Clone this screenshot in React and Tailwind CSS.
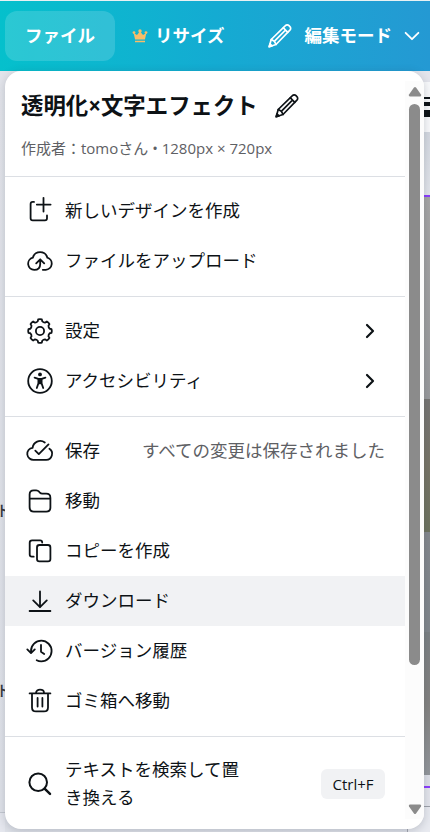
import React from "react";

const Icon = ({ children, className = "w-[30px] h-[30px]", width = 1.8 }) => (
  <svg
    viewBox="0 0 30 30"
    fill="none"
    stroke="currentColor"
    strokeWidth={width}
    strokeLinecap="round"
    strokeLinejoin="round"
    className={`shrink-0 ${className}`}
  >
    {children}
  </svg>
);

const Pencil = ({ className }) => (
  <Icon className={className} width={1.7}>
    <path d="M4.2 25.7l2-7.2L20.4 4.7a2.5 2.5 0 0 1 3.6 0l.9.9a2.5 2.5 0 0 1 0 3.6L11 23.5z" />
    <path d="M18.4 6.9l4.4 4.4M9.3 20.3L20.2 9.3M6.3 18.5l3 1.8 1.8 3.1" />
    <path d="M4.2 25.7l.8-2.8 2 2z" fill="currentColor" />
  </Icon>
);

// eight rounded teeth around the centre
const gearPath = () => {
  const at = (deg, r) => {
    const a = (deg * Math.PI) / 180;
    return `${(15 + r * Math.sin(a)).toFixed(2)} ${(15 - r * Math.cos(a)).toFixed(2)}`;
  };
  let d = `M${at(-9, 11.7)}`;
  for (let i = 0; i < 8; i++) {
    const a = i * 45;
    d += `Q${at(a, 12.1)} ${at(a + 9, 11.7)}L${at(a + 13, 10)}Q${at(a + 22.5, 9)} ${at(a + 32, 10)}L${at(a + 36, 11.7)}`;
  }
  return d + "Z";
};

const icons = {
  create: (
    <Icon>
      <path d="M9 5.9H7.7q-2.1 0-2.1 2.1v14.3q0 2.1 2.1 2.1h12.2q2.1 0 2.1-2.1v-2.8M11.8 8.6h13.8M18.5 1.8v13.8" />
    </Icon>
  ),
  upload: (
    <Icon>
      <path d="M17.8 23.8h3a6.2 6.2 0 0 0 1.6-12.1 7.6 7.6 0 0 0-14.6 0A6.2 6.2 0 0 0 9.2 23.9c3.6 0 6-2.3 6-6v-4.5M11.2 17.3l4-4 4 4" />
    </Icon>
  ),
  settings: (
    <Icon>
      <path d={gearPath()} />
      <circle cx="15" cy="15" r="4.1" />
    </Icon>
  ),
  accessibility: (
    <Icon>
      <circle cx="15" cy="15" r="11.8" />
      <circle cx="15" cy="8.4" r="1.9" fill="currentColor" stroke="none" />
      <path d="M9.6 11.6l3.7 1.2h3.4l3.7-1.2" width="1.6" />
      <path d="M16.6 12.8v4.6l1.6 4.6M13.4 12.8v4.6l-1.6 4.6M13.4 17.3h3.2" />
      <path d="M13.4 12.6h3.2v5h-3.2z" fill="currentColor" stroke="none" />
    </Icon>
  ),
  saved: (
    <Icon>
      <path d="M19.8 6.5A7.6 7.6 0 0 0 7.6 11.8 6 6 0 0 0 9 23.8h12.2a6 6 0 0 0 3.2-11M10.3 14.6l3.5 3.5 9.7-9.7" />
    </Icon>
  ),
  move: (
    <Icon>
      <path d="M4.6 12.7h20.8M4.6 21V8.6q0-4.2 4.2-4.2h2.4q1.7 0 2.9 1.3l.8 1q.9 1 2.3 1h4q4.2 0 4.2 4.2v9.6q0 4.1-4.2 4.1H8.8q-4.2 0-4.2-4.6z" />
    </Icon>
  ),
  copy: (
    <Icon>
      <path d="M8.7 20.7H6.8q-2.1 0-2.1-2.1V6.8q0-2.4 2.4-2.4h8q2.1 0 2.1 2.2" />
      <rect x="12" y="9" width="13.4" height="16.4" rx="2.4" />
    </Icon>
  ),
  download: (
    <Icon>
      <path d="M15 5.4v15.8M8.2 14.4l6.8 6.8 6.8-6.8M4.6 25h20.8" />
    </Icon>
  ),
  history: (
    <Icon>
      <path d="M6 16.4v-1.5a10.3 10.3 0 1 1 10.3 10.4c-2 0-3.5-.5-4.6-1.1M2.3 13.4L6 17.1l3.8-3.7M16 9v6.8l3.2 2.2" />
    </Icon>
  ),
  trash: (
    <Icon>
      <path d="M4.6 7.4h20.8M7 7.4v14q0 4 4 4h8q4 0 4-4v-14M11 7c0-4.4 8-4.4 8 0M12.6 12v8.6M17.4 12v8.6" />
    </Icon>
  ),
  search: (
    <Icon width={2}>
      <circle cx="13.2" cy="13.2" r="8.8" />
      <path d="M19.6 19.6l5.4 5.2" strokeWidth="2.5" />
    </Icon>
  ),
};

const Item = ({ icon, label, note, arrow, active }) => (
  <div
    className={`flex h-[50px] items-center pl-5 pr-5 ${active ? "bg-[#f1f2f4]" : ""}`}
  >
    {icons[icon]}
    <span className="ml-[10px] pb-[2px] whitespace-nowrap">{label}</span>
    {note && (
      <span className="ml-auto pb-[2px] whitespace-nowrap text-[#5e6064]">
        {note}
      </span>
    )}
    {arrow && (
      <Icon className="ml-auto h-[30px] w-[30px]" width={2.2}>
        <path d="M12 9l6 6-6 6" />
      </Icon>
    )}
  </div>
);

const Group = ({ children }) => (
  <div className="border-t border-[#dcdfe4] pt-[9px] pb-[10px]">{children}</div>
);

const TopBar = () => (
  <header className="mt-px flex h-[70px] items-center bg-gradient-to-r from-[#05c0cc] via-[#14abd2] to-[#2499d3] pl-[5px] text-[17.5px] font-bold text-white">
    <div className="flex h-[50px] w-[110px] items-center justify-center rounded-xl bg-white/15 pb-[2px]">
      ファイル
    </div>
    <svg viewBox="0 0 16 14" className="ml-[17px] h-[14px] w-4" fill="#f9bd68">
      <circle cx="8" cy="2" r="1.7" />
      <circle cx="2" cy="3.6" r="1.4" />
      <circle cx="14" cy="3.6" r="1.4" />
      <path d="M1.6 4l3.4 2L8 2.2 11 6l3.4-2-1.5 6.6H3.1zM3 11.8h10v1.4H3z" />
    </svg>
    <span className="ml-[7px] pb-[2px]">リサイズ</span>
    <Pencil className="ml-[41px] h-[30px] w-[30px]" />
    <span className="ml-[9px] pb-[2px] whitespace-nowrap">編集モード</span>
    <Icon className="ml-[5px] h-[30px] w-[30px]" width={1.8}>
      <path d="M8.6 11.8L15 18.2l6.4-6.4" />
    </Icon>
  </header>
);

// sliver of the editor that shows on both sides of the menu
const Editor = () => (
  <div className="flex h-[761px] justify-between bg-gradient-to-b from-[#e3e5eb] to-[#dfe2e9]">
    <div className="flex w-[5px] flex-col text-[15px] leading-5 font-medium text-[#33373d]">
      <div className="mt-[429px] -ml-[4px] w-5">ト</div>
      <div className="mt-[160px] -ml-[4px] w-5">ト</div>
      <div className="mt-[112px] h-px bg-[#c4c8d0]" />
      <div className="flex-1 bg-[#e5e7ee]" />
    </div>
    <div className="flex w-[23px] flex-col">
      <div className="h-[11px] bg-[#e4e5ec]" />
      <div className="flex h-[50px] flex-col items-end bg-[#f8f9fb] pt-[15px]">
        <div className="h-[2px] w-[6px] bg-[#0d1216]" />
        <div className="mt-[3px] h-[4px] w-[6px] bg-[#0d1216]" />
        <div className="mt-[4px] h-[7px] w-[6px] bg-[#0d1216]" />
      </div>
      <div className="h-[63px] bg-gradient-to-b from-[#d3d8e0] to-[#e2e5eb]" />
      <div className="h-[2px] bg-[#8b3dff]" />
      <div className="h-[202px] bg-gradient-to-b from-[#a5a5a5] to-[#999a9c]" />
      <div className="h-[133px] bg-gradient-to-b from-[#767573] via-[#777466] to-[#6d735f]" />
      <div className="h-[100px] bg-gradient-to-b from-[#84888d] to-[#80868b]" />
      <div className="h-[143px] bg-gradient-to-b from-[#7b8083] via-[#838280] to-[#92969b]" />
      <div className="h-[11px] bg-[#dddfe7]" />
      <div className="h-[2px] bg-[#8b3dff]" />
      <div className="h-[18px] bg-[#e3e5ec]" />
      <div className="h-px bg-[#9da1a9]" />
      <div className="flex-1 border-l border-[#a4a8b0] bg-[#e8eaf0]" />
    </div>
  </div>
);

const Scrollbar = () => (
  <div className="my-[10px] flex w-[19px] shrink-0 flex-col items-center bg-[#fcfcfc] pt-[5px] pb-[4px] text-[#8b8b8b]">
    <svg viewBox="0 0 14 11" className="h-[11px] w-[14px]" fill="currentColor">
      <path d="M6 1.6q1-1.2 2 0l5 7q.8 1.9-1 1.9H2q-1.8 0-1-1.9z" />
    </svg>
    <div className="mt-[7px] h-[561px] w-[11px] rounded-full bg-[#8b8b8b]" />
    <svg
      viewBox="0 0 14 11"
      className="mt-auto h-[11px] w-[14px] rotate-180"
      fill="currentColor"
    >
      <path d="M6 1.6q1-1.2 2 0l5 7q.8 1.9-1 1.9H2q-1.8 0-1-1.9z" />
    </svg>
  </div>
);

const FileMenu = () => (
  <div className="absolute top-[71px] left-[5px] flex h-[758px] w-[419px] overflow-hidden rounded-2xl bg-white text-[17.5px] text-[#0d1216] shadow-[0_2px_10px_rgba(40,50,70,0.22)]">
    <div className="w-[400px] shrink-0">
      <div className="h-[105px] pt-5 pl-4">
        <div className="flex h-[30px] items-center">
          <h1 className="text-[22.4px] font-bold whitespace-nowrap">
            透明化×文字エフェクト
          </h1>
          <Pencil className="ml-[14px] h-[30px] w-[30px]" />
        </div>
        <p className="mt-[17px] text-[15px] leading-5 whitespace-nowrap text-[#5e6064]">
          作成者：tomoさん • 1280px × 720px
        </p>
      </div>
      <Group>
        <Item icon="create" label="新しいデザインを作成" />
        <Item icon="upload" label="ファイルをアップロード" />
      </Group>
      <Group>
        <Item icon="settings" label="設定" arrow />
        <Item icon="accessibility" label="アクセシビリティ" arrow />
      </Group>
      <Group>
        <Item icon="saved" label="保存" note="すべての変更は保存されました" />
        <Item icon="move" label="移動" />
        <Item icon="copy" label="コピーを作成" />
        <Item icon="download" label="ダウンロード" active />
        <Item icon="history" label="バージョン履歴" />
        <Item icon="trash" label="ゴミ箱へ移動" />
      </Group>
      <Group>
        <div className="flex h-[76px] items-center px-5">
          {icons.search}
          <span className="ml-[10px] w-[180px] pb-[2px] leading-7">
            テキストを検索して置き換える
          </span>
          <kbd className="ml-auto flex h-[30px] w-16 items-center justify-center rounded-md bg-[#f1f2f4] font-['Open_Sans',sans-serif] text-[15px]">
            Ctrl+F
          </kbd>
        </div>
      </Group>
    </div>
    <Scrollbar />
  </div>
);

const App = () => {
  return (
    <div
      lang="ja"
      className="relative flex h-[832px] w-[430px] flex-col overflow-hidden bg-[#e8f1f3] font-['Open_Sans','Noto_Sans_CJK_JP',sans-serif]"
    >
      <TopBar />
      <Editor />
      <FileMenu />
    </div>
  );
};

export default App;
